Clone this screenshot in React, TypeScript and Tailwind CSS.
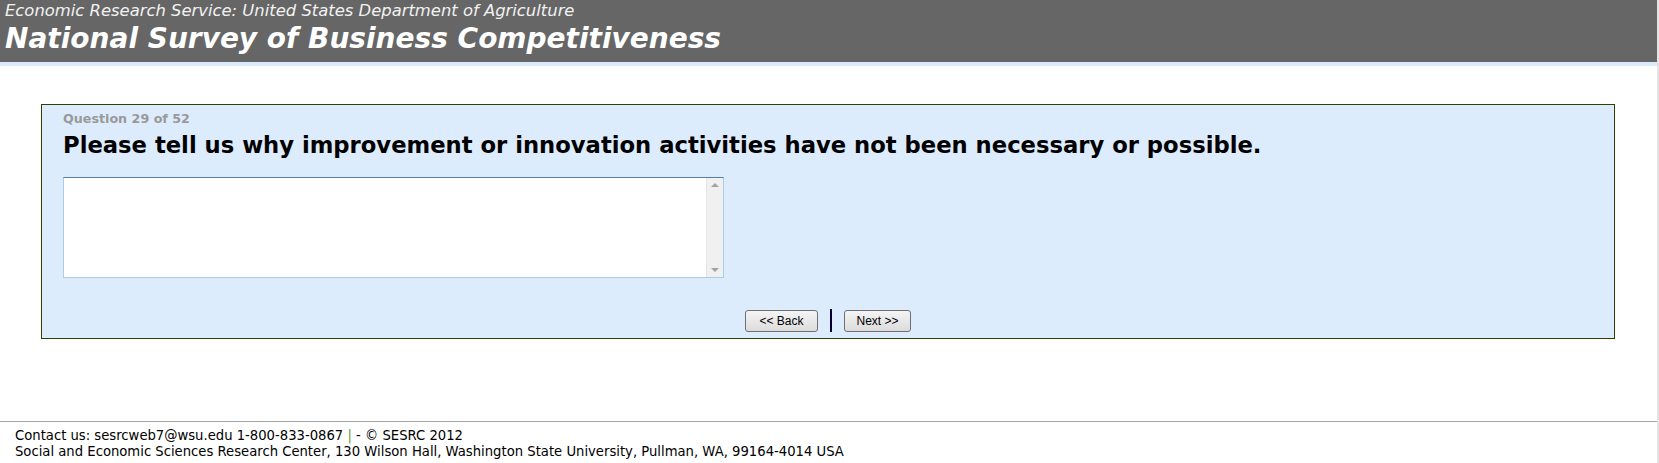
import { useState } from 'react'

const TAHOMA = { fontFamily: '"DejaVu Sans", Verdana, sans-serif' }

export default function App() {
  const [answer, setAnswer] = useState('')

  return (
    <div className="flex w-[1659px] min-h-[463px] bg-white">
      <div className="flex-1 flex flex-col">
        {/* header */}
        <div className="bg-[#666666] h-[62px] pl-[5px] pt-[1px]" style={TAHOMA}>
          <div className="text-[#f2f2f2] italic text-[16.4px] leading-[20px]">Economic Research Service: United States Department of Agriculture</div>
          <div className="text-white italic font-bold text-[28px] leading-[34px] mt-[1px]">National Survey of Business Competitiveness</div>
        </div>
        <div className="h-[4px] bg-[#dcebfb]" />

        <div className="pl-[41px] pr-[42px] pt-[38px]">
          <div className="border border-[#2d4200] bg-[#ddecfc] h-[235px] px-[21px] pt-[6px] flex flex-col">
            <div className="text-[#999999] font-bold text-[12.7px] leading-[16px]" style={TAHOMA}>Question 29 of 52</div>
            <div className="text-black font-bold text-[22.7px] leading-[26px] mt-[5px]" style={TAHOMA}>
              Please tell us why improvement or innovation activities have not been necessary or possible.
            </div>
            <div className="mt-[19px] w-[661px] h-[101px] flex bg-white border border-[#a9cde9] border-t-[#4f7fb3]">
              <textarea
                value={answer}
                onChange={e => setAnswer(e.target.value)}
                className="flex-1 resize-none outline-none px-1 py-[2px] text-[13px]"
                style={{ fontFamily: '"DejaVu Sans Mono", monospace' }}
              />
              <div className="w-[17px] bg-[#f0f0f0] border-l border-[#e6e6e6] flex flex-col items-center justify-between py-[5px]">
                <span className="w-0 h-0 border-l-[4px] border-r-[4px] border-b-[4px] border-l-transparent border-r-transparent border-b-[#a3a3a3]" />
                <span className="w-0 h-0 border-l-[4px] border-r-[4px] border-t-[4px] border-l-transparent border-r-transparent border-t-[#a3a3a3]" />
              </div>
            </div>
            <div className="mt-[31px] flex items-center justify-center gap-[12px]" style={{ fontFamily: '"Liberation Sans", Arial, sans-serif' }}>
              <button className="w-[73px] h-[22px] rounded-[3px] border border-[#707070] bg-gradient-to-b from-[#f4f4f4] to-[#dcdcdc] text-[12px] text-black">&lt;&lt; Back</button>
              <span className="w-[2px] h-[23px] bg-[#000033]" />
              <button className="w-[67px] h-[22px] rounded-[3px] border border-[#707070] bg-gradient-to-b from-[#f4f4f4] to-[#dcdcdc] text-[12px] text-black">Next &gt;&gt;</button>
            </div>
          </div>
        </div>

        {/* footer */}
        <div className="mt-[82px] border-t border-[#a6a6a6] pl-[15px] pt-[6px] text-[13.2px] leading-[16px] text-black" style={{ fontFamily: '"DejaVu Sans", Verdana, sans-serif' }}>
          <div>Contact us: sesrcweb7@wsu.edu 1-800-833-0867 <span className="text-[#669933]">|</span> - © SESRC 2012</div>
          <div>Social and Economic Sciences Research Center, 130 Wilson Hall, Washington State University, Pullman, WA, 99164-4014 USA</div>
        </div>
      </div>
      <div className="w-[2px] bg-[#e3e3e3]" />
    </div>
  )
}
